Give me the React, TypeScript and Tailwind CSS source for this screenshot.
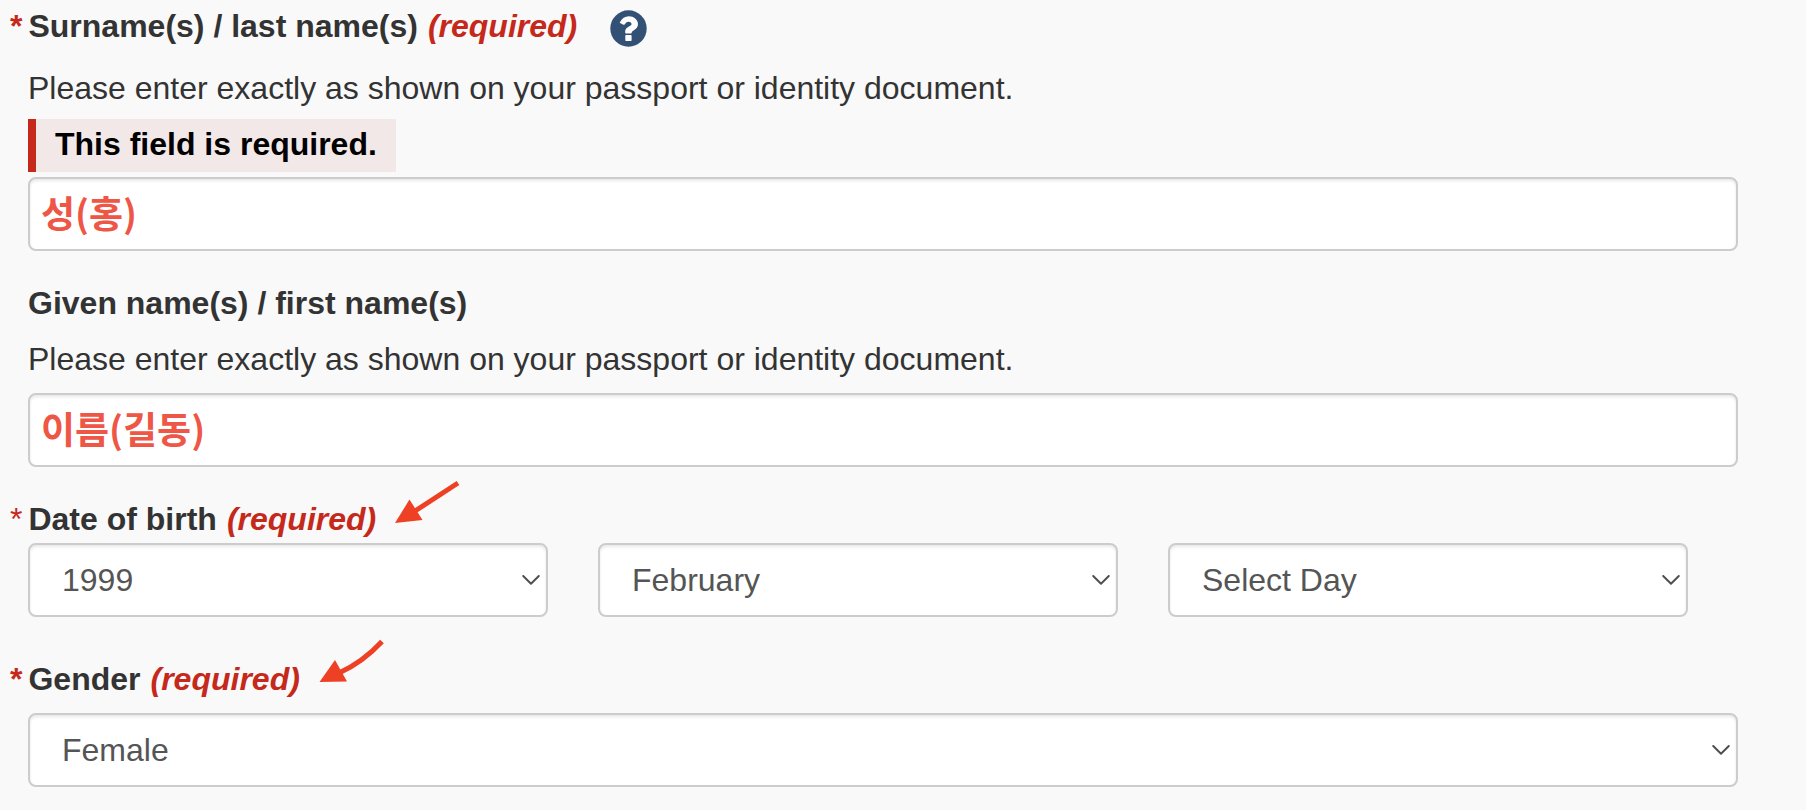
import React, { useState } from 'react';

const YEARS = ['1997', '1998', '1999', '2000', '2001'];
const MONTHS = [
  'January', 'February', 'March', 'April', 'May', 'June',
  'July', 'August', 'September', 'October', 'November', 'December',
];
const DAYS = ['Select Day', ...Array.from({ length: 28 }, (_, i) => String(i + 1))];
const GENDERS = ['Female', 'Male', 'Another gender'];

const controlClass =
  'block w-full h-[74px] rounded-lg border-2 border-[#ccc] bg-white shadow-[inset_0_2px_3px_rgba(0,0,0,0.09)] outline-none focus:border-[#66afe9]';

const Star: React.FC<{ light?: boolean }> = ({ light }) => (
  <span aria-hidden="true" className={`-ml-[18px] mr-[6px] text-[#c5291c] ${light ? 'font-normal' : ''}`}>
    *
  </span>
);

const Required = () => <em className="ml-[10px] text-[#c5291c]">(required)</em>;

interface TextFieldProps {
  id: string;
  value: string;
  onChange: (value: string) => void;
}

const TextField: React.FC<TextFieldProps> = ({ id, value, onChange }) => (
  <input
    id={id}
    type="text"
    value={value}
    onChange={(e) => onChange(e.target.value)}
    className={`${controlClass} px-[11px] pb-[5px] font-['Noto_Sans_CJK_KR',sans-serif] text-[37px] font-bold text-[#ee5646]`}
  />
);

interface SelectFieldProps {
  id: string;
  label?: string;
  options: string[];
  defaultValue: string;
}

const SelectField: React.FC<SelectFieldProps> = ({ id, label, options, defaultValue }) => (
  <div className="relative">
    <select
      id={id}
      aria-label={label}
      defaultValue={defaultValue}
      className={`${controlClass} appearance-none pr-10 pl-8 text-[32px] text-[#555]`}
    >
      {options.map((option) => (
        <option key={option}>{option}</option>
      ))}
    </select>
    <svg
      viewBox="0 0 18 10"
      fill="none"
      className="pointer-events-none absolute top-8 right-2 h-[10px] w-[18px] text-[#4d4d4d]"
    >
      <path d="M1.2 1 L9 8.7 L16.8 1" stroke="currentColor" strokeWidth="1.9" strokeLinecap="round" strokeLinejoin="round" />
    </svg>
  </div>
);

const App: React.FC = () => {
  const [surname, setSurname] = useState('성(홍)');
  const [givenName, setGivenName] = useState('이름(길동)');

  return (
    <div className="min-h-screen bg-[#f9f9f9]">
      <form className="flex flex-col pt-[6px] pr-[68px] pb-[22px] pl-7 font-['Liberation_Sans',Arial,sans-serif] text-[32px] leading-[40px] text-[#333]">
        {/* Surname */}
        <div className="mb-8">
          <div className="mb-[21px] flex items-start">
            <label htmlFor="surname" className="font-bold">
              <Star />
              Surname(s) / last name(s)
              <Required />
            </label>
            <button type="button" aria-label="Help" className="mt-1 ml-[33px]">
              <svg viewBox="0 0 37 37" className="block h-[37px] w-[37px]">
                <circle cx="18.5" cy="18.5" r="18.2" fill="#335075" />
                <path
                  d="M9.9 12.2 C12 8.2 14.8 6.2 18.9 6.2 C23.6 6.2 28 9.6 28 14.1 C28 17.2 26.3 18.9 23.9 20.3 C22.3 21.2 21.7 21.9 21.7 22.7 C21.7 23.2 21.4 23.5 20.9 23.5 H16 C15.5 23.5 15.2 23.2 15.2 22.7 V21.9 C15.2 18.6 17.4 17.4 19.3 16.3 C20.8 15.5 21.5 15 21.5 13.9 C21.5 12.6 20 11.8 18.5 11.8 C16.6 11.8 15.8 13 14.6 14.5 C14.3 14.9 13.8 15 13.4 14.7 L10.1 13.1 C9.7 12.9 9.7 12.6 9.9 12.2 Z"
                  fill="#fff"
                />
                <rect x="15.3" y="25" width="6.3" height="6" rx="0.8" fill="#fff" />
              </svg>
            </button>
          </div>
          <p className="mb-[11px]">Please enter exactly as shown on your passport or identity document.</p>
          <div className="mb-[5px] flex">
            <strong className="border-l-8 border-[#c5291c] bg-[#f2e8e7] px-[19px] pt-[5px] pb-2 text-black">
              This field is required.
            </strong>
          </div>
          <TextField id="surname" value={surname} onChange={setSurname} />
        </div>

        {/* Given name */}
        <div className="mb-8">
          <label htmlFor="given-name" className="mb-4 block font-bold">
            Given name(s) / first name(s)
          </label>
          <p className="mb-[14px]">Please enter exactly as shown on your passport or identity document.</p>
          <TextField id="given-name" value={givenName} onChange={setGivenName} />
        </div>

        {/* Date of birth */}
        <fieldset className="mb-[42px]">
          <legend className="relative mb-1 font-bold">
            <Star light />
            Date of birth
            <Required />
            <svg viewBox="390 479 74 50" className="pointer-events-none absolute -top-[21px] left-full ml-[14px] h-[50px] w-[74px]">
              <path d="M458 484 L415 512" stroke="#ee4024" strokeWidth="5" />
              <path d="M395 524 L409.5 500.5 L422.5 521 Z" fill="#ee4024" />
            </svg>
          </legend>
          <div className="grid grid-cols-3">
            <div className="pr-[50px]">
              <SelectField id="birth-year" label="Year" options={YEARS} defaultValue="1999" />
            </div>
            <div className="pr-[50px]">
              <SelectField id="birth-month" label="Month" options={MONTHS} defaultValue="February" />
            </div>
            <div className="pr-[50px]">
              <SelectField id="birth-day" label="Day" options={DAYS} defaultValue="Select Day" />
            </div>
          </div>
        </fieldset>

        {/* Gender */}
        <div>
          <div className="mb-[14px] flex">
            <label htmlFor="gender" className="relative font-bold">
              <Star />
              Gender
              <Required />
              <svg viewBox="313 638 74 50" className="pointer-events-none absolute -top-[21px] left-full ml-[14px] h-[50px] w-[74px]">
                <path d="M381 641.5 Q362 662 338 673" fill="none" stroke="#ee4024" strokeWidth="5" />
                <path d="M318.5 682 L334 660 L346 681.5 Z" fill="#ee4024" />
              </svg>
            </label>
          </div>
          <SelectField id="gender" options={GENDERS} defaultValue="Female" />
        </div>
      </form>
    </div>
  );
};

export default App;
